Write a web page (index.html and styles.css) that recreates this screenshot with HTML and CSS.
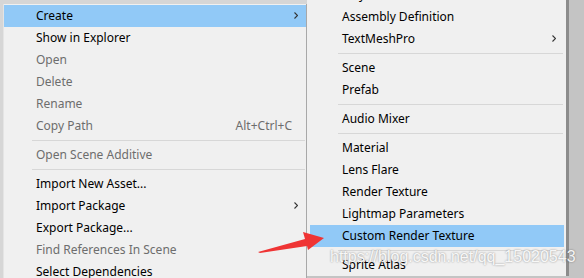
FILE: index.html
```html
<!DOCTYPE html>
<html lang="en">
<head>
  <meta charset="UTF-8">
  <title>Project - Create menu</title>
  <link rel="stylesheet" href="styles.css">
</head>
<body>

<div class="desk">
  <!-- Project context menu -->
  <div class="panel">
    <ul class="menu menu-main">
      <li class="item active">Create <svg class="sub" viewBox="0 0 4 7"><path d="M0.5 0.5 L3.5 3.5 L0.5 6.5"/></svg></li>
      <li class="item">Show in Explorer</li>
      <li class="item off">Open</li>
      <li class="item off">Delete</li>
      <li class="item off">Rename</li>
      <li class="item off">Copy Path <span class="keys">Alt+Ctrl+C</span></li>
      <li class="sep"></li>
      <li class="item off">Open Scene Additive</li>
      <li class="sep"></li>
      <li class="item">Import New Asset...</li>
      <li class="item">Import Package <svg class="sub" viewBox="0 0 4 7"><path d="M0.5 0.5 L3.5 3.5 L0.5 6.5"/></svg></li>
      <li class="item">Export Package...</li>
      <li class="item off">Find References In Scene</li>
      <li class="item">Select Dependencies</li>
    </ul>
  </div>

  <!-- Create submenu -->
  <ul class="menu menu-sub">
    <li class="item">Playables <svg class="sub" viewBox="0 0 4 7"><path d="M0.5 0.5 L3.5 3.5 L0.5 6.5"/></svg></li>
    <li class="item">Assembly Definition</li>
    <li class="item">TextMeshPro <svg class="sub" viewBox="0 0 4 7"><path d="M0.5 0.5 L3.5 3.5 L0.5 6.5"/></svg></li>
    <li class="sep"></li>
    <li class="item">Scene</li>
    <li class="item">Prefab</li>
    <li class="sep"></li>
    <li class="item">Audio Mixer</li>
    <li class="sep"></li>
    <li class="item">Material</li>
    <li class="item">Lens Flare</li>
    <li class="item">Render Texture</li>
    <li class="item">Lightmap Parameters</li>
    <li class="item active">Custom Render Texture</li>
    <li class="sep"></li>
    <li class="item">Sprite Atlas</li>
  </ul>
</div>

<!-- annotation drawn over the screenshot -->
<svg class="pointer" width="584" height="278" viewBox="0 0 584 278">
  <polygon points="258,252 305,239 303,232 324,238 308,250 307,246 260,253"/>
</svg>

<div class="watermark">https://blog.csdn.net/qq_15020543</div>

</body>
</html>
```

FILE: styles.css
```css
:root {
  --menu: #f0f0f0;
  --hover: #91c9f7;
  --line: #d7d7d7;
  --muted: #6d6d6d;
  --editor: #c4c4c4;
}

body {
  margin: 0;
  height: 278px;
  overflow: hidden;
  background: var(--editor);
  font-family: 'Noto Sans', 'Microsoft YaHei', sans-serif;
  font-size: 12px;
  color: #000;
}

.desk {
  display: flex;
  align-items: flex-start;
}

.panel {
  background: #d6d6d6;
  padding: 4px 0 0 3px;
}

.menu {
  list-style: none;
  margin: 0;
  background: var(--menu);
}

.menu-main {
  width: 302px;
  padding: 1px 0 0 0;
  border-left: 1px solid #e4e4e4;
  border-right: 1px solid #a8a8a8;
}

.menu-sub {
  width: 254px;
  margin-top: -16px;
  padding: 0 2px 0 3px;
  border-right: 3px solid #8c8c8c;
}

.item {
  box-sizing: border-box;
  display: flex;
  align-items: center;
  height: 22px;
  padding: 0 8px 1px 32px;
  white-space: nowrap;
}

.item.active {
  background: var(--hover);
}

.item.off {
  color: var(--muted);
}

.keys {
  margin-left: auto;
  margin-right: 6px;
}

.sub {
  margin-left: auto;
  width: 4px;
  height: 7px;
  fill: none;
  stroke: #333;
  stroke-width: 1.1;
}

.sep {
  height: 1px;
  margin: 3px 1px 3px 28px;
  background: var(--line);
}

.pointer {
  position: absolute;
  left: 0;
  top: 0;
  fill: #ef3434;
}

.watermark {
  position: absolute;
  left: 330px;
  top: 248px;
  line-height: 18px;
  font-family: 'Liberation Sans', Arial, sans-serif;
  font-size: 16px;
  color: rgba(255, 255, 255, 0.92);
  text-shadow: 0 0 2px rgba(0, 0, 0, 0.45);
}
```
